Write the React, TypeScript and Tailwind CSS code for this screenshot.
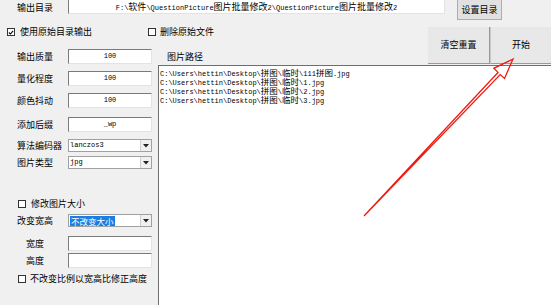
import React from 'react';

const mono = "font-['Liberation_Mono','Noto_Sans_CJK_SC',monospace]";

// mixed ascii (fixed font) + CJK text, like the old Windows fixedsys look
const Mixed: React.FC<{ text: string; cjk?: string }> = ({ text, cjk = 'text-[9px]' }) => {
  const parts = text.split(/([\u4e00-\u9fff]+)/);
  return (
    <>
      {parts.map((p, i) =>
        /[\u4e00-\u9fff]/.test(p) ? (
          <span key={i} className={`${cjk} font-['Noto_Sans_CJK_SC',sans-serif]`}>{p}</span>
        ) : (
          <span key={i}>{p}</span>
        )
      )}
    </>
  );
};

const CheckBox: React.FC<{ checked?: boolean }> = ({ checked }) => (
  <div className="w-[8px] h-[8px] border border-[#333] bg-white flex items-center justify-center shrink-0">
    {checked && (
      <svg width="7" height="7" viewBox="0 0 7 7">
        <path d="M1 3.5 L2.8 5.3 L6 1.5" stroke="#000" strokeWidth="1.3" fill="none" />
      </svg>
    )}
  </div>
);

const TextBox: React.FC<{ value?: string; className?: string }> = ({ value, className = '' }) => (
  <div
    className={`w-[84px] h-[15px] bg-white border border-t-[#7a7a7a] border-l-[#7a7a7a] border-r-[#e3e3e3] border-b-[#e3e3e3] flex items-center justify-center text-[7px] ${mono} ${className}`}
  >
    {value}
  </div>
);

const Combo: React.FC<{ value: string; selected?: boolean; className?: string }> = ({ value, selected, className = '' }) => (
  <div className={`w-[84px] h-[13px] bg-white border border-[#a0a0a0] flex items-center ${className}`}>
    <div className="flex-1 pl-[1px] flex items-center h-full">
      {selected ? (
        <span className="bg-[#1a7ee6] text-white text-[8.5px] leading-[10px] px-[1px]">{value}</span>
      ) : (
        <span className={`text-[7px] ${mono}`}>{value}</span>
      )}
    </div>
    <div className="w-[11px] h-[11px] bg-[#f0f0f0] border-l border-[#d0d0d0] flex items-center justify-center">
      <svg width="6" height="4" viewBox="0 0 6 4">
        <path d="M0 0 H6 L3 3.5 Z" fill="#222" />
      </svg>
    </div>
  </div>
);

const Row: React.FC<{ label: string; indent?: boolean; className?: string; children: React.ReactNode }> = ({
  label,
  indent,
  className = '',
  children,
}) => (
  <div className={`flex items-center ${className}`}>
    <div className={`w-[68px] text-[9px] leading-[10px] ${indent ? 'pl-[26px]' : 'pl-[17px]'}`}>{label}</div>
    {children}
  </div>
);

const paths = [
  'C:\\Users\\hettin\\Desktop\\拼图\\临时\\111拼图.jpg',
  'C:\\Users\\hettin\\Desktop\\拼图\\临时\\1.jpg',
  'C:\\Users\\hettin\\Desktop\\拼图\\临时\\2.jpg',
  'C:\\Users\\hettin\\Desktop\\拼图\\临时\\3.jpg',
];

export default function App() {
  return (
    <div className="relative w-[551px] h-[305px] overflow-hidden bg-[#f0f0f0] text-black font-['Noto_Sans_CJK_SC','Liberation_Sans',sans-serif] flex flex-col">
      {/* output directory */}
      <div className="flex items-start h-[22px] shrink-0">
        <div className="w-[68px] pl-[17px] pt-[3px] text-[9px] leading-[10px]">输出目录</div>
        <div className={`w-[377px] h-[14px] bg-white border border-t-0 border-l-[#7a7a7a] border-r-[#e3e3e3] border-b-[#e3e3e3] text-center whitespace-nowrap text-[7px] leading-[13px] ${mono}`}>
          <Mixed text="F:\软件\QuestionPicture图片批量修改2\QuestionPicture图片批量修改2" cjk="text-[9px]" />
        </div>
        <button className="ml-[12px] w-[45px] h-[20px] bg-[#e1e1e1] border border-t-0 border-[#adadad] text-[9px] leading-[10px]">
          设置目录
        </button>
      </div>

      {/* options + buttons */}
      <div className="flex h-[43px] shrink-0">
        <div className="w-[428px] flex flex-col">
          <div className="mt-[4px] h-[12px] flex items-center">
            <div className="w-[148px] flex items-center pl-[7px]">
              <CheckBox checked />
              <span className="ml-[5px] text-[9px] leading-[10px]">使用原始目录输出</span>
            </div>
            <div className="flex items-center">
              <CheckBox />
              <span className="ml-[4px] text-[9px] leading-[10px]">删除原始文件</span>
            </div>
          </div>
          <div className="mt-[11px] flex items-center">
            <Row label="输出质量" className="w-[167px]">
              <TextBox value="100" />
            </Row>
            <span className="text-[9px] leading-[10px]">图片路径</span>
          </div>
        </div>
        <div className="mt-[5px] flex h-[37px] flex-1">
          <button className="w-[62px] h-full bg-[#e8e8e8] border-r border-b border-[#9a9a9a] text-[9px]">清空重置</button>
          <button className="flex-1 h-full bg-[#e8e8e8] border-b border-l border-[#c8c8c8] border-b-[#9a9a9a] text-[9px]">
            开始
          </button>
        </div>
      </div>

      {/* settings + path list */}
      <div className="flex flex-1 min-h-0">
        <div className="w-[158px] shrink-0 flex flex-col">
          <Row label="量化程度" className="mt-[6px]">
            <TextBox value="100" />
          </Row>
          <Row label="颜色抖动" className="mt-[7px]">
            <TextBox value="100" />
          </Row>
          <Row label="添加后缀" className="mt-[9px]">
            <TextBox value="_wp" />
          </Row>
          <Row label="算法编码器" className="mt-[7px]">
            <Combo value="lanczos3" />
          </Row>
          <Row label="图片类型" className="mt-[4px]">
            <Combo value="jpg" />
          </Row>
          <div className="mt-[30px] flex items-center pl-[18px]">
            <CheckBox />
            <span className="ml-[5px] text-[9px] leading-[10px]">修改图片大小</span>
          </div>
          <Row label="改变宽高" className="mt-[5px]">
            <Combo value="不改变大小" selected />
          </Row>
          <Row label="宽度" indent className="mt-[9px]">
            <TextBox />
          </Row>
          <Row label="高度" indent className="mt-[2px]">
            <TextBox />
          </Row>
          <div className="mt-[6px] flex items-center pl-[18px]">
            <CheckBox />
            <span className="ml-[4px] text-[9px] leading-[10px]">不改变比例以宽高比修正高度</span>
          </div>
        </div>
        <div className={`flex-1 bg-white border-l border-t border-[#6e6e6e] pl-[1px] pt-[2px] text-[7px] leading-[9px] ${mono}`}>
          {paths.map((p) => (
            <div key={p} className="whitespace-nowrap h-[9px] leading-[9px]">
              <Mixed text={p} cjk="text-[8.5px] leading-[9px]" />
            </div>
          ))}
        </div>
      </div>

      {/* red annotation arrow */}
      <svg className="absolute inset-0 pointer-events-none" width="551" height="305" viewBox="0 0 551 305">
        <polygon
          points="513,59 504.5,78.5 500.2,74.6 364,216 498,72.4 493.8,68.3"
          fill="none"
          stroke="#f01a10"
          strokeWidth="1.3"
          strokeLinejoin="miter"
        />
      </svg>
    </div>
  );
}
